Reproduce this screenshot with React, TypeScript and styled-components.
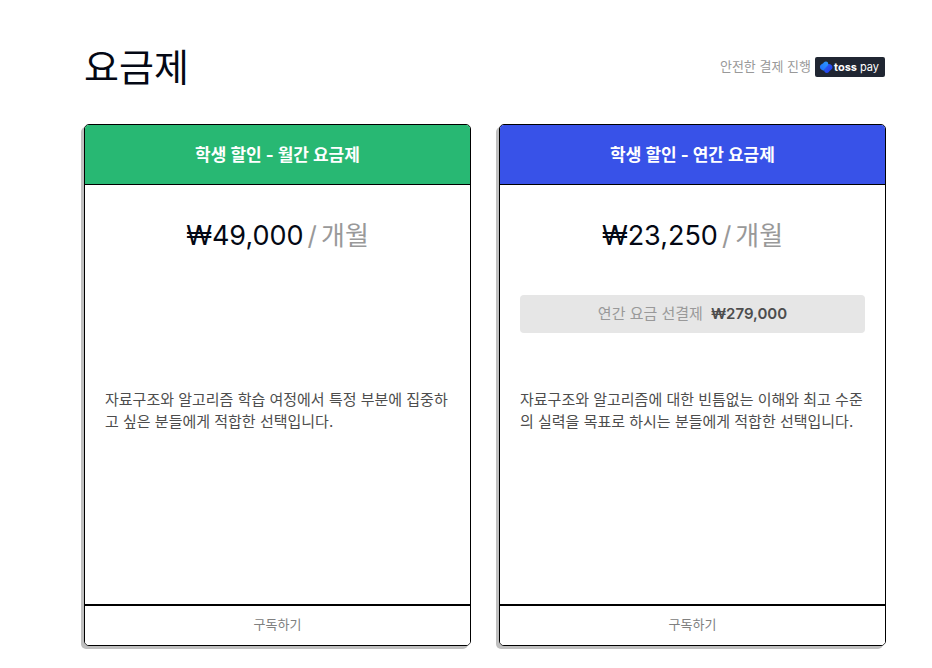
import React from "react";
import styled, { createGlobalStyle } from "styled-components";

const GlobalStyle = createGlobalStyle`
  * { box-sizing: border-box; }
  body {
    margin: 0;
    background: #fff;
    color: #040814;
    font-family: Inter, "Noto Sans CJK KR", sans-serif;
  }
`;

const Page = styled.main`
  padding: 36px 46px 22px 84px;
`;

const Header = styled.header`
  display: flex;
  justify-content: space-between;
  align-items: center;
  height: 62px;
`;

const Title = styled.h1`
  margin: 0;
  font-size: 38px;
  line-height: 60px;
  font-weight: 400;
`;

const Payment = styled.div`
  display: flex;
  align-items: center;
  gap: 4px;
  padding-right: 1px;
  font-size: 13px;
  line-height: 18px;
  color: #999;
`;

const PaymentLabel = styled.span`
  padding-bottom: 2px;
`;

const Badge = styled.svg`
  display: block;
  width: 70px;
  height: 20px;
`;

const Plans = styled.div`
  display: grid;
  grid-template-columns: 1fr 1fr;
  gap: 28px;
  margin-top: 26px;
`;

const Card = styled.section`
  display: flex;
  flex-direction: column;
  min-height: 522px;
  border: 1px solid #000;
  border-radius: 5px;
  background: #fff;
  box-shadow: -3px 3px 0 #bfbfbf;
  overflow: hidden;
`;

const CardTitle = styled.h2<{ $color: string }>`
  margin: 0;
  padding: 19px 20px 18px;
  border-bottom: 1px solid #000;
  background: ${(p) => p.$color};
  color: #fff;
  font-size: 17px;
  line-height: 22px;
  font-weight: 700;
  text-align: center;
`;

const Price = styled.p`
  display: flex;
  justify-content: center;
  gap: 4px;
  margin: 0;
  padding-top: 31px;
  font-size: 27px;
  line-height: 40px;
`;

const Unit = styled.span`
  display: flex;
  gap: 4px;
  color: #999;
  font-size: 26px;
`;

const PrepaySlot = styled.div`
  height: 118px;
  padding: 39px 20px;
`;

const Prepay = styled.p`
  display: flex;
  justify-content: center;
  gap: 8px;
  margin: 0;
  padding: 8px;
  border-radius: 4px;
  background: #e6e6e6;
  color: #999;
  font-size: 15px;
  line-height: 22px;
`;

const Amount = styled.strong`
  color: #4d4d4d;
  font-weight: 600;
`;

const Description = styled.p`
  flex: 1;
  margin: 0;
  padding: 15px 20px;
  color: #4d4d4d;
  font-size: 15px;
  line-height: 22px;
  word-break: break-all;
`;

const Subscribe = styled.button`
  height: 41px;
  padding: 0 0 4px;
  border: 0;
  border-top: 2px solid #000;
  background: #fff;
  color: #808080;
  font: inherit;
  font-size: 13px;
  line-height: 20px;
  cursor: pointer;
`;

const plans = [
  {
    title: "학생 할인 - 월간 요금제",
    color: "#28b873",
    price: "₩49,000",
    prepay: "",
    text: "자료구조와 알고리즘 학습 여정에서 특정 부분에 집중하고 싶은 분들에게 적합한 선택입니다.",
  },
  {
    title: "학생 할인 - 연간 요금제",
    color: "#3852e8",
    price: "₩23,250",
    prepay: "₩279,000",
    text: "자료구조와 알고리즘에 대한 빈틈없는 이해와 최고 수준의 실력을 목표로 하시는 분들에게 적합한 선택입니다.",
  },
];

function TossPay() {
  return (
    <Badge viewBox="0 0 70 20" role="img" aria-label="toss pay">
      <defs>
        <linearGradient id="toss-light" x1="0" y1="1" x2="1" y2="0">
          <stop offset="0" stopColor="#1f6bff" />
          <stop offset="1" stopColor="#2d9bff" />
        </linearGradient>
        <linearGradient id="toss-deep" x1="0" y1="0" x2="1" y2="1">
          <stop offset="0" stopColor="#2a63ff" />
          <stop offset="1" stopColor="#2337e6" />
        </linearGradient>
      </defs>
      <rect width="70" height="20" rx="2" fill="#202632" />
      <path d="M12.500 7.100c2.700-.7 5 1 5 3.200 0 1.600-1.100 2.300-2.100 2.900-1.200.8-1.700 2.700-3.600 2.700-1.700 0-2.700-1.300-2.600-2.900.1-2.200 2.400-2.800 3.300-5.900z" fill="url(#toss-deep)" />
      <path d="M13.200 6.400c.3 2.300-2.200 3.600-3.200 5-.6.900-.8 1.600-.9 2.300-2.100 0-4.200-1.500-4.200-3.600 0-1.900 1.400-2.500 2.500-3.300 1.200-.9 1.800-2.400 3.600-2.400 1.200 0 2.100.8 2.200 2z" fill="url(#toss-light)" />
      <text x="19" y="14" fill="#fff" fontSize="11" fontWeight="700" fontFamily="Inter, sans-serif">toss</text>
      <text x="45" y="14" fill="#fff" fontSize="11" fontFamily="Inter, sans-serif">pay</text>
    </Badge>
  );
}

export default function App() {
  return (
    <>
      <GlobalStyle />
      <Page>
        <Header>
          <Title>요금제</Title>
          <Payment>
            <PaymentLabel>안전한 결제 진행</PaymentLabel>
            <TossPay />
          </Payment>
        </Header>
        <Plans>
          {plans.map((plan) => (
            <Card key={plan.title}>
              <CardTitle $color={plan.color}>{plan.title}</CardTitle>
              <Price>{plan.price}<Unit><span>/</span><span>개월</span></Unit></Price>
              <PrepaySlot>
                {plan.prepay && <Prepay>연간 요금 선결제 <Amount>{plan.prepay}</Amount></Prepay>}
              </PrepaySlot>
              <Description>{plan.text}</Description>
              <Subscribe type="button">구독하기</Subscribe>
            </Card>
          ))}
        </Plans>
      </Page>
    </>
  );
}
